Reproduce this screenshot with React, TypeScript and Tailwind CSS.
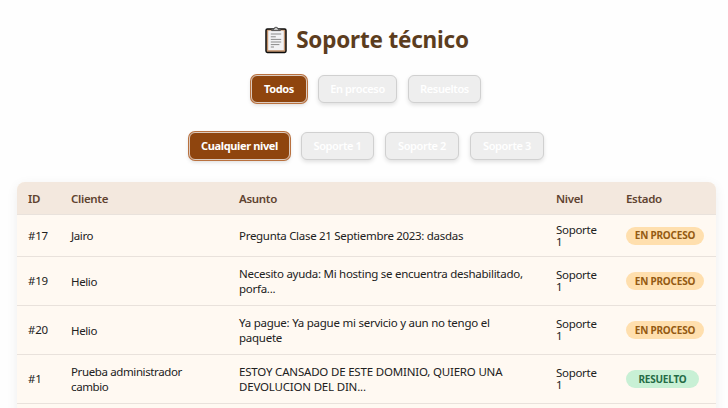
type FilterProps = { label: string; active?: boolean; width: string };

function FilterButton({ label, active, width }: FilterProps) {
  return (
    <button
      className={`${width} h-7 shrink-0 rounded-[6px] border text-[11px] whitespace-nowrap text-white ${
        active
          ? "border-[#dccabe] bg-[#8f450e] font-bold tracking-[-0.36px] shadow-[0_0_0_1px_#b9713f,0_2px_4px_rgba(0,0,0,0.15)]"
          : "border-[#d0d0d0] bg-[#eeeeee] font-semibold tracking-[-0.38px] shadow-[0_2px_4px_rgba(0,0,0,0.12)]"
      }`}
    >
      {label}
    </button>
  );
}

function ClipboardIcon() {
  return (
    <svg width="24" height="28" viewBox="0 0 24 28" className="shrink-0">
      <rect x="2" y="3" width="20" height="23.4" rx="1.4" fill="#c2926c" stroke="#0c0c0c" strokeWidth="1.5" />
      <rect x="4.2" y="4.6" width="15.6" height="19.6" fill="#f2f2f4" />
      <path d="M7.6 4.6V3.2h2.4a2 2 0 0 1 4 0h2.4v1.4z" fill="#c4c4c4" stroke="#444" strokeWidth="0.9" />
      <path d="M6.8 8h10.4M6.8 10.8h5M6.8 13.4h10.4M6.8 16h10.4M6.8 18.6h8.6M6.8 21h3.2" stroke="#8a8a8a" strokeWidth="1" />
    </svg>
  );
}

const rows = [
  { id: "#17", client: ["Jairo"], subject: ["Pregunta Clase 21 Septiembre 2023: dasdas"], done: false, height: "h-[42px]", spacing: "tracking-[-0.3px]" },
  { id: "#19", client: ["Helio"], subject: ["Necesito ayuda: Mi hosting se encuentra deshabilitado,", "porfa..."], done: false, height: "h-[49px]", spacing: "tracking-[-0.27px]" },
  { id: "#20", client: ["Helio"], subject: ["Ya pague: Ya pague mi servicio y aun no tengo el", "paquete"], done: false, height: "h-[49px]", spacing: "tracking-[-0.25px]" },
  { id: "#1", client: ["Prueba administrador", "cambio"], subject: ["ESTOY CANSADO DE ESTE DOMINIO, QUIERO UNA", "DEVOLUCION DEL DIN..."], done: true, height: "h-[49px]", spacing: "tracking-[-0.19px]" },
  { id: "", client: [""], subject: [""], done: null, height: "h-[49px]", spacing: "" },
];

const columns = "grid grid-cols-[43px_168px_317px_70px_101px] items-center border-b border-[#e9e2dc] *:pl-[11px] *:whitespace-nowrap";

function Lines({ lines, spacing }: { lines: string[]; spacing: string }) {
  return (
    <div className={`leading-[15px] ${spacing}`}>
      {lines.map((line) => (
        <div key={line}>{line}</div>
      ))}
    </div>
  );
}

export default function App() {
  return (
    <main className="h-[408px] w-[728px] overflow-hidden bg-[#fefefe] font-['Noto_Sans','Open_Sans',sans-serif] text-[#212121]">
      <h1 className="flex h-[75px] items-center justify-center gap-2 pt-1 pl-[5px] text-[22.5px] font-bold tracking-[-0.2px] text-[#5c3d1e]">
        <ClipboardIcon />
        <span>Soporte técnico</span>
      </h1>
      <div className="flex h-[57px] justify-center gap-[11px] pl-1">
        <FilterButton label="Todos" active width="w-14" />
        <FilterButton label="En proceso" width="w-[79px]" />
        <FilterButton label="Resueltos" width="w-[73px]" />
      </div>
      <div className="flex h-[50px] justify-center gap-[11px] pl-[5px]">
        <FilterButton label="Cualquier nivel" active width="w-[101px]" />
        <FilterButton label="Soporte 1" width="w-[73px]" />
        <FilterButton label="Soporte 2" width="w-[74px]" />
        <FilterButton label="Soporte 3" width="w-[74px]" />
      </div>
      <section className="ml-[17px] w-[699px] overflow-hidden rounded-t-[8px] bg-[#fff9f2] text-[11.5px] tracking-[-0.3px] shadow-[0_3px_12px_rgba(0,0,0,0.07)]">
        <div className={`${columns} h-[33px] bg-[#f3e8de] pt-0.5 font-semibold tracking-[-0.32px] text-[#5f4330]`}>
          <div>ID</div>
          <div>Cliente</div>
          <div>Asunto</div>
          <div>Nivel</div>
          <div>Estado</div>
        </div>
        {rows.map((row) => (
          <div key={row.height + row.id} className={`${columns} ${row.height}`}>
            <div className="pb-px leading-[15px]">{row.id}</div>
            <Lines lines={row.client} spacing="tracking-[-0.38px]" />
            <Lines lines={row.subject} spacing={row.spacing} />
            <div className="leading-[12px]">
              {row.done !== null && (
                <>
                  Soporte
                  <br />1
                </>
              )}
            </div>
            <div>
              {row.done !== null && (
                <span
                  className={`flex h-[18px] items-center justify-center rounded-full text-[10px] font-bold tracking-[-0.2px] ${
                    row.done ? "w-[73px] bg-[#c8f0d5] text-[#256b45]" : "w-[78px] bg-[#ffdfae] text-[#945a12]"
                  }`}
                >
                  {row.done ? "RESUELTO" : "EN PROCESO"}
                </span>
              )}
            </div>
          </div>
        ))}
      </section>
    </main>
  );
}
